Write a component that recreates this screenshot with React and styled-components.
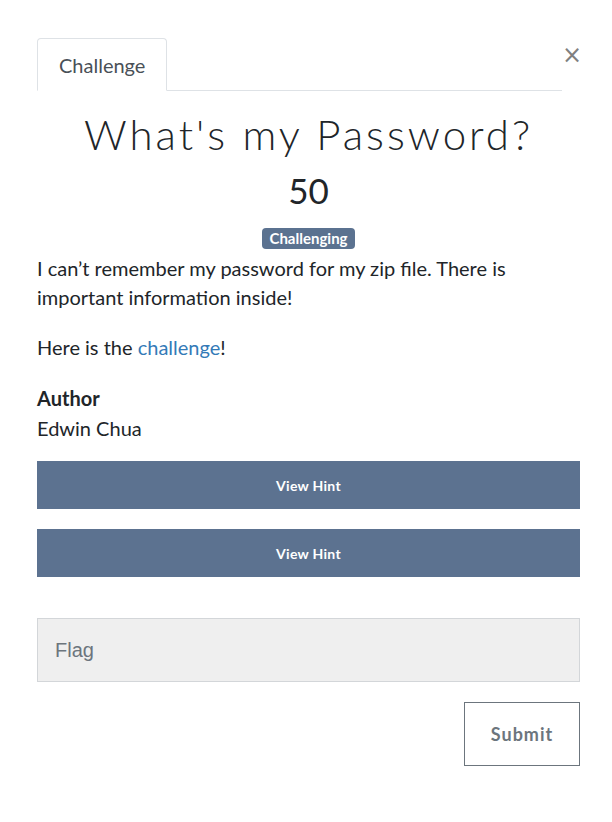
import React from 'react';
import styled, { createGlobalStyle } from 'styled-components';

const Global = createGlobalStyle`
  body {
    margin: 0;
    background: #fff;
    font-family: Lato, "Open Sans", sans-serif;
    color: #212529;
  }
  * { box-sizing: border-box; }
`;

const Modal = styled.div`
  padding: 38px 32px 40px 37px;
`;

const TabBar = styled.div`
  display: flex;
  align-items: flex-start;
`;

const Tabs = styled.div`
  flex: 1;
  display: flex;
  border-bottom: 1px solid #dee2e6;
`;

const Tab = styled.div`
  padding: 14px 21px 13px;
  margin-bottom: -1px;
  border: 1px solid #dee2e6;
  border-bottom-color: #fff;
  border-radius: 4px 4px 0 0;
  font-size: 20px;
  line-height: 24px;
  color: #495057;
  background: #fff;
`;

const Close = styled.button`
  width: 18px;
  border: 0;
  background: none;
  padding: 0;
  margin-top: 5px;
  font-family: "DejaVu Sans", sans-serif;
  font-size: 24px;
  line-height: 1;
  color: #808080;
  cursor: pointer;
`;

const Title = styled.h1`
  margin: 18px 0 0;
  text-align: center;
  font-family: Lato, sans-serif;
  font-weight: 300;
  font-size: 42px;
  letter-spacing: 3px;
  line-height: 1.2;
  color: #212529;
`;

const Points = styled.div`
  text-align: center;
  font-size: 35px;
  line-height: 1.2;
  margin-top: 10px;
`;

const BadgeRow = styled.div`
  display: flex;
  justify-content: center;
  margin-top: 17px;
`;

const Badge = styled.span`
  display: block;
  background: #5b7290;
  color: #fff;
  font-weight: 700;
  font-size: 15px;
  line-height: 15px;
  padding: 3px 7px;
  border-radius: 4px;
`;

const Text = styled.p`
  margin: 0 0 21px;
  font-size: 20px;
  line-height: 29px;
  &:first-of-type { margin-top: 5px; }
`;

const Link = styled.a`
  color: #337ab7;
  text-decoration: none;
`;

const AuthorHead = styled.div`
  font-weight: 700;
  font-size: 20px;
  line-height: 30px;
`;

const AuthorName = styled.div`
  font-size: 20px;
  line-height: 30px;
`;

const HintButton = styled.button`
  display: block;
  width: 100%;
  height: 48px;
  border: 0;
  background: #5c7290;
  color: #fff;
  font-family: Lato, sans-serif;
  font-weight: 700;
  font-size: 14px;
  letter-spacing: 0.3px;
  margin-top: ${(p) => p.$gap}px;
`;

const FlagInput = styled.input`
  display: block;
  width: 100%;
  height: 64px;
  margin-top: 41px;
  background: #efefef;
  border: 1px solid #d3d6d9;
  padding: 0 17px;
  font-family: "Liberation Sans", Arial, sans-serif;
  font-size: 20px;
  color: #495057;
  &::placeholder { color: #6c757d; }
`;

const SubmitRow = styled.div`
  display: flex;
  justify-content: flex-end;
  margin-top: 20px;
`;

const Submit = styled.button`
  width: 116px;
  height: 64px;
  background: #fff;
  border: 1px solid #6c757d;
  color: #6c757d;
  font-family: Lato, sans-serif;
  font-weight: 700;
  font-size: 18px;
  letter-spacing: 1px;
`;

export default function App() {
  return (
    <Modal>
      <Global />
      <TabBar>
        <Tabs>
          <Tab>Challenge</Tab>
        </Tabs>
        <Close aria-label="Close">×</Close>
      </TabBar>
      <Title>What's my Password?</Title>
      <Points>50</Points>
      <BadgeRow>
        <Badge>Challenging</Badge>
      </BadgeRow>
      <Text>I can’t remember my password for my zip file. There is important information inside!</Text>
      <Text>
        Here is the <Link href="#">challenge</Link>!
      </Text>
      <AuthorHead>Author</AuthorHead>
      <AuthorName>Edwin Chua</AuthorName>
      <HintButton $gap={18}>View Hint</HintButton>
      <HintButton $gap={20}>View Hint</HintButton>
      <FlagInput placeholder="Flag" />
      <SubmitRow>
        <Submit>Submit</Submit>
      </SubmitRow>
    </Modal>
  );
}
